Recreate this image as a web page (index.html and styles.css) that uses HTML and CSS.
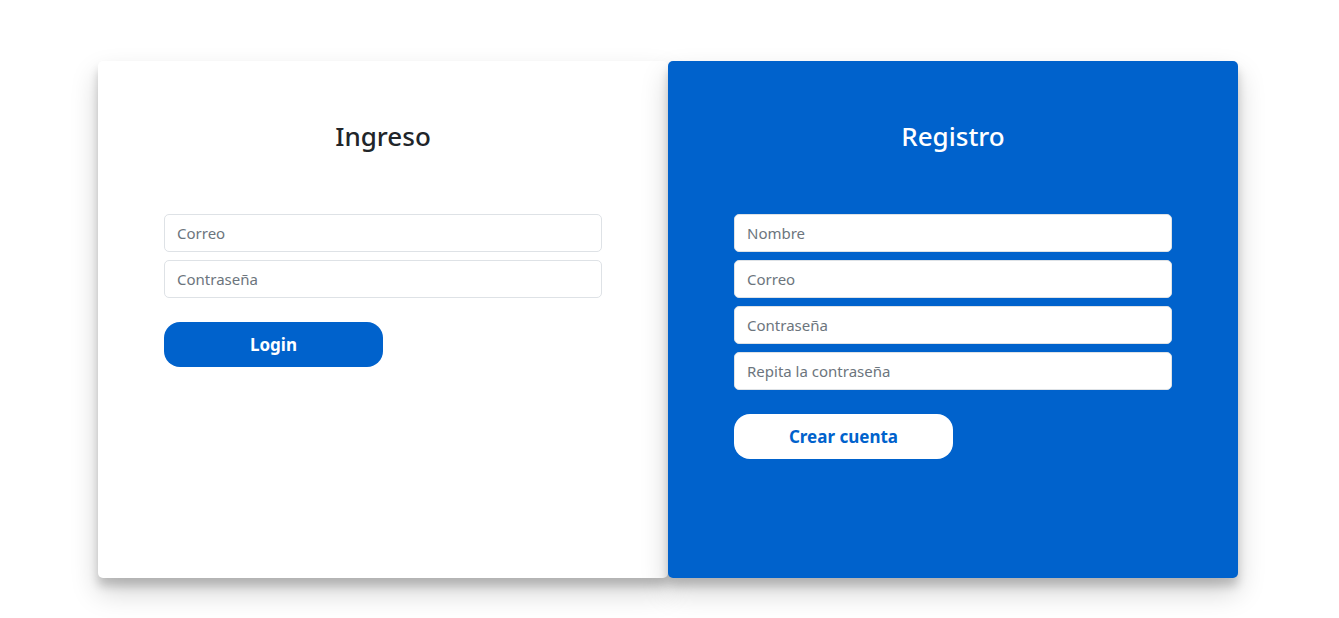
FILE: index.html
```html
<!DOCTYPE html>
<html lang="es">
<head>
  <meta charset="UTF-8">
  <title>Ingreso / Registro</title>
  <link rel="stylesheet" href="styles.css">
</head>
<body>
  <div class="container">

    <!-- Ingreso -->
    <div class="card login-card">
      <h3 class="card-title">Ingreso</h3>
      <form class="form">
        <input type="text" class="input" placeholder="Correo">
        <input type="password" class="input" placeholder="Contraseña">
        <button type="button" class="btn btn-blue">Login</button>
      </form>
    </div>

    <!-- Registro -->
    <div class="card register-card">
      <h3 class="card-title">Registro</h3>
      <form class="form">
        <input type="text" class="input" placeholder="Nombre">
        <input type="text" class="input" placeholder="Correo">
        <input type="password" class="input" placeholder="Contraseña">
        <input type="password" class="input" placeholder="Repita la contraseña">
        <button type="button" class="btn btn-white">Crear cuenta</button>
      </form>
    </div>

  </div>
</body>
</html>
```

FILE: styles.css
```css
html, body {
  margin:0; padding:0;
  background:#fff;
  font-family:"Segoe UI", "Noto Sans", sans-serif;
  color:#212529;
}
body {
  min-height:100vh;
}
.container {
  display:flex;
  padding:61px 0 62px 98px;
}
.card {
  width:570px;
  height:517px;
  box-sizing:border-box;
  padding:58px 66px 0 66px;
  border-radius:5px;
  box-shadow:0 14px 28px rgba(0,0,0,0.18), 0 8px 10px rgba(0,0,0,0.18);
}
.login-card {
  background:#fff;
}
.register-card {
  background:#0062cc;
  color:#fff;
}
.card-title {
  margin:0;
  text-align:center;
  font-size:26px;
  font-weight:500;
  line-height:34px;
}
.form {
  display:flex;
  flex-direction:column;
  align-items:flex-start;
  gap:8px;
  margin-top:61px;
}
.input {
  width:100%;
  height:38px;
  box-sizing:border-box;
  padding:6px 12px;
  font-family:inherit;
  font-size:15px;
  color:#495057;
  background:#fff;
  border:1px solid #dee2e6;
  border-radius:5px;
}
.input::placeholder {
  color:#6c757d;
}
.btn {
  margin-top:16px;
  width:219px;
  height:45px;
  border:none;
  border-radius:16px;
  font-family:inherit;
  font-size:17px;
  font-weight:700;
  cursor:pointer;
}
.btn-blue {
  background:#0062cc;
  color:#fff;
}
.btn-white {
  background:#fff;
  color:#0062cc;
}
```
